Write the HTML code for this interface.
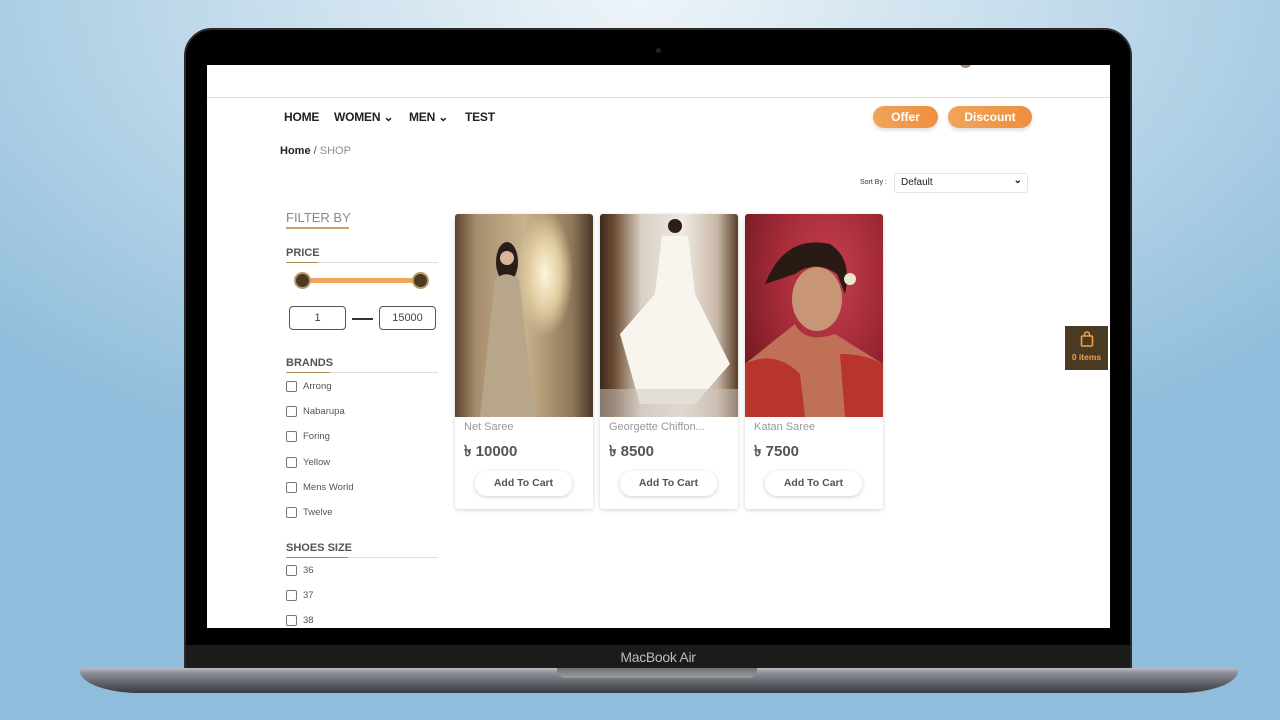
<!DOCTYPE html>
<html><head><meta charset="utf-8"><style>
*{margin:0;padding:0;box-sizing:border-box}
body{width:1280px;height:720px;overflow:hidden;position:relative;font-family:"Liberation Sans",sans-serif;
background:radial-gradient(ellipse 900px 500px at 640px 0px,#eef4f8 0%,#c4dcec 45%,#8fbddb 100%);}
.abs{position:absolute}
.bezel{left:184px;top:28px;width:948px;height:645px;background:#000;border-radius:28px 28px 0 0;border:2px solid #2a2a2a}
.chin{left:186px;top:645px;width:944px;height:24px;background:#1b1b1c;color:#bdbdbd;font-size:14px;text-align:center;line-height:24px;letter-spacing:-.3px}
.base{left:80px;top:668px;width:1158px;height:25px;background:linear-gradient(#b9bcc2 0,#8c8f96 20%,#55585e 70%,#3b3d42 100%);border-radius:2px 2px 60px 60px/2px 2px 22px 22px}
.notch{left:557px;top:668px;width:200px;height:10px;background:linear-gradient(#6e7076,#9a9ca2);border-radius:0 0 8px 8px}
.screen{left:207px;top:65px;width:903px;height:563px;background:#fff;overflow:hidden}
.nav{font-size:12px;font-weight:bold;color:#222;letter-spacing:-.2px}
.btn{height:22px;border-radius:11px;background:linear-gradient(90deg,#f0a45a,#ee8f3f);color:#fff;font-size:12px;font-weight:bold;text-align:center;line-height:22px;box-shadow:0 2px 4px rgba(0,0,0,.15)}
.h{font-size:11px;font-weight:bold;color:#555}
.cb{width:11px;height:11px;border:1px solid #777;border-radius:2px}
.lb{font-size:9.5px;color:#555}
.card{width:138px;height:295px;background:#fff;box-shadow:0 1px 4px rgba(0,0,0,.18);border-radius:3px;overflow:hidden}
.img{width:138px;height:203px}
.nm{position:absolute;left:9px;top:207px;font-size:11px;color:#999}
.pr{position:absolute;left:9px;top:226px;font-size:15px;color:#555;font-weight:bold}
.ac{position:absolute;left:20px;top:257px;width:97px;height:25px;border-radius:12px;box-shadow:0 1px 4px rgba(0,0,0,.2);font-size:10.5px;font-weight:bold;color:#555;text-align:center;line-height:25px}
</style></head><body>
<div class="abs bezel"></div>
<div class="abs" style="left:656px;top:48px;width:5px;height:5px;border-radius:50%;background:#222"></div>
<div class="abs chin">MacBook Air</div>
<div class="abs base"></div>
<div class="abs notch"></div>
<div class="abs screen">
 <div class="abs" style="left:753px;top:-6px;width:11px;height:9px;border-radius:50%;background:#a88b72"></div>
 <div class="abs" style="left:0;top:32px;width:903px;height:1px;background:#d8dbe0"></div>
 <div class="abs nav" style="left:77px;top:45px">HOME</div>
 <div class="abs nav" style="left:127px;top:45px">WOMEN ⌄</div>
 <div class="abs nav" style="left:202px;top:45px">MEN ⌄</div>
 <div class="abs nav" style="left:258px;top:45px">TEST</div>
 <div class="abs btn" style="left:666px;top:41px;width:65px">Offer</div>
 <div class="abs btn" style="left:741px;top:41px;width:84px">Discount</div>
 <div class="abs" style="left:73px;top:80px;font-size:11px"><b style="color:#222">Home</b> <span style="color:#555">/</span> <span style="color:#8a8f98">SHOP</span></div>
 <div class="abs" style="left:653px;top:114px;font-size:7px;color:#333">Sort By :</div>
 <div class="abs" style="left:687px;top:108px;width:134px;height:20px;border:1px solid #e3e3e3;border-radius:3px;font-size:10px;color:#222;padding:3px 6px">Default<span style="position:absolute;right:5px;top:1px;font-weight:bold">⌄</span></div>
 <div class="abs" style="left:79px;top:145px;font-size:13px;color:#888">FILTER BY</div>
 <div class="abs" style="left:79px;top:162px;width:63px;height:2px;background:#c9a46c"></div>
 <div class="abs h" style="left:79px;top:182px">PRICE</div>
 <div class="abs" style="left:79px;top:197px;width:152px;height:1px;background:#ddd"></div>
 <div class="abs" style="left:79px;top:197px;width:32px;height:1px;background:#b08a55"></div>
 <div class="abs" style="left:92px;top:213px;width:122px;height:5px;background:#f2a65a"></div>
 <div class="abs" style="left:87px;top:207px;width:17px;height:17px;border-radius:50%;background:#4a3a22;border:2px solid #b79a6a"></div>
 <div class="abs" style="left:205px;top:207px;width:17px;height:17px;border-radius:50%;background:#4a3a22;border:2px solid #b79a6a"></div>
 <div class="abs" style="left:82px;top:241px;width:57px;height:24px;border:1px solid #555;border-radius:4px;font-size:11px;color:#444;text-align:center;line-height:22px">1</div>
 <div class="abs" style="left:145px;top:253px;width:21px;height:2px;background:#333"></div>
 <div class="abs" style="left:172px;top:241px;width:57px;height:24px;border:1px solid #555;border-radius:4px;font-size:11px;color:#444;text-align:center;line-height:22px">15000</div>
 <div class="abs h" style="left:79px;top:292px">BRANDS</div>
 <div class="abs" style="left:79px;top:307px;width:152px;height:1px;background:#ddd"></div>
 <div class="abs" style="left:79px;top:307px;width:44px;height:1px;background:#b08a55"></div>
 <div class="abs cb" style="left:79px;top:316px"></div><div class="abs lb" style="left:96px;top:316px">Arrong</div>
 <div class="abs cb" style="left:79px;top:341px"></div><div class="abs lb" style="left:96px;top:341px">Nabarupa</div>
 <div class="abs cb" style="left:79px;top:366px"></div><div class="abs lb" style="left:96px;top:366px">Foring</div>
 <div class="abs cb" style="left:79px;top:392px"></div><div class="abs lb" style="left:96px;top:392px">Yellow</div>
 <div class="abs cb" style="left:79px;top:417px"></div><div class="abs lb" style="left:96px;top:417px">Mens World</div>
 <div class="abs cb" style="left:79px;top:442px"></div><div class="abs lb" style="left:96px;top:442px">Twelve</div>
 <div class="abs h" style="left:79px;top:477px">SHOES SIZE</div>
 <div class="abs" style="left:79px;top:492px;width:152px;height:1px;background:#ddd"></div>
 <div class="abs" style="left:79px;top:492px;width:62px;height:1px;background:#b08a55"></div>
 <div class="abs cb" style="left:79px;top:500px"></div><div class="abs lb" style="left:96px;top:500px">36</div>
 <div class="abs cb" style="left:79px;top:525px"></div><div class="abs lb" style="left:96px;top:525px">37</div>
 <div class="abs cb" style="left:79px;top:550px"></div><div class="abs lb" style="left:96px;top:550px">38</div>

 <div class="abs card" style="left:248px;top:149px">
  <div class="img" style="background:radial-gradient(ellipse 40px 90px at 90px 60px,#fff6dc 0%,#e0cba0 40%,transparent 70%),linear-gradient(90deg,#5b4330 0,#a58c6e 15%,#c9b48e 50%,#8e7658 85%,#4a3828 100%)"><svg width="138" height="203"><ellipse cx="52" cy="48" rx="11" ry="20" fill="#2a1d17"/><path d="M40 65 Q52 55 64 66 L80 203 L25 203 Z" fill="#b7a68a"/><circle cx="52" cy="44" r="7" fill="#d8b59b"/></svg></div>
  <div class="nm">Net Saree</div><div class="pr">৳ 10000</div><div class="ac">Add To Cart</div></div>
 <div class="abs card" style="left:393px;top:149px">
  <div class="img" style="background:linear-gradient(90deg,#3e2a1c 0,#6b4c34 10%,#d9d0c4 30%,#efeae4 60%,#c9b8a6 85%,#5a3e2a 100%)"><svg width="138" height="203"><circle cx="75" cy="12" r="7" fill="#2b1e16"/><path d="M62 22 L88 22 L95 80 L130 150 L95 190 L40 190 L20 120 L55 80 Z" fill="#f8f5ef"/><rect x="0" y="175" width="138" height="28" fill="#cfc8c0" opacity=".5"/></svg></div>
  <div class="nm">Georgette Chiffon...</div><div class="pr">৳ 8500</div><div class="ac">Add To Cart</div></div>
 <div class="abs card" style="left:538px;top:149px">
  <div class="img" style="background:radial-gradient(ellipse at 60% 30%,#c8414f 0%,#a32a38 45%,#5c1418 100%)"><svg width="138" height="203"><path d="M20 70 Q40 20 85 30 Q108 45 100 80 L92 60 Q70 45 50 60 Z" fill="#2a1a14"/><ellipse cx="72" cy="85" rx="25" ry="32" fill="#c99577"/><path d="M50 110 Q60 130 90 120 L138 150 L138 203 L0 203 L0 150 Z" fill="#c07056"/><path d="M0 150 Q30 135 55 160 L60 203 L0 203 Z M95 140 Q120 140 138 150 L138 203 L100 203 Z" fill="#b8352c"/><circle cx="105" cy="65" r="6" fill="#eee6cf"/></svg></div>
  <div class="nm">Katan Saree</div><div class="pr">৳ 7500</div><div class="ac">Add To Cart</div></div>

 <div class="abs" style="left:858px;top:261px;width:43px;height:44px;background:#4a3a22">
  <svg class="abs" style="left:15px;top:5px" width="14" height="16" viewBox="0 0 14 16"><rect x="1.5" y="5" width="11" height="10" rx="1" fill="none" stroke="#f0a04f" stroke-width="1.6"/><path d="M4.5 5 V3.5 a2.5 2.5 0 0 1 5 0 V5" fill="none" stroke="#f0a04f" stroke-width="1.6"/></svg>
  <div class="abs" style="left:0;top:26px;width:43px;text-align:center;font-size:8.5px;font-weight:bold;color:#f0a04f">0 items</div>
 </div>
</div>
</body></html>
